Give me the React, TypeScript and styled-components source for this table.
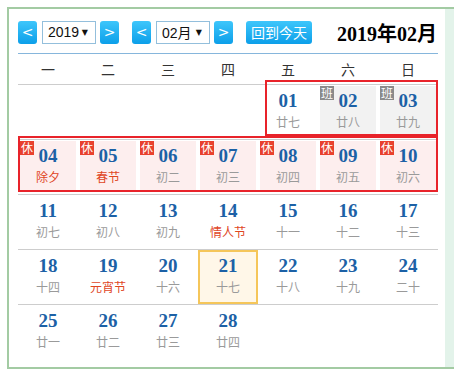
import React from "react";
import styled, { createGlobalStyle } from "styled-components";

const GlobalStyle = createGlobalStyle`
  html, body { margin: 0; padding: 0; overflow: hidden; background: #fff; }
  body { font-family: "Liberation Sans", "Noto Sans CJK SC", sans-serif; }
`;

const Frame = styled.div`
  margin: 7px 0 0 7px;
  width: 447px;
  height: 362px;
  box-sizing: border-box;
  border: 2px solid #a3cba3;
  border-right: none;
  display: flex;
`;

const Main = styled.div`
  width: 436px;
  box-sizing: border-box;
  padding: 11px 7px 0 9px;
  background: #fff;
`;

const Side = styled.div`
  flex: 1;
  background: #e3f3ea;
`;

const Toolbar = styled.div`
  display: flex;
  align-items: center;
  height: 24px;
  padding-bottom: 9px;
  border-bottom: 1px solid #86b6dc;
`;

const NavButton = styled.div<{ $gap?: number }>`
  width: 19px;
  height: 23px;
  box-sizing: border-box;
  border-radius: 3px;
  background: linear-gradient(#3ec6fb, #0c9fe9);
  color: #fff;
  font: 14px/23px "DejaVu Sans", sans-serif;
  text-align: center;
  margin-right: ${(p) => p.$gap ?? 0}px;
`;

const FakeSelect = styled.div`
  width: 54px;
  height: 23px;
  box-sizing: border-box;
  border: 1px solid #93bfdc;
  display: flex;
  align-items: center;
  padding-left: 5px;
  margin: 0 4px 0 5px;
  font: 14px "Liberation Sans", "Noto Sans CJK SC", sans-serif;
  color: #111;
`;

const Arrow = styled.span`
  margin-left: auto;
  margin-right: 7px;
  font: 8px "DejaVu Sans", sans-serif;
  color: #111;
`;

const TodayButton = styled.div`
  height: 23px;
  box-sizing: border-box;
  padding: 0 5px;
  border-radius: 3px;
  background: linear-gradient(#3ec6fb, #0c9fe9);
  color: #fff;
  font: 14px/23px "Noto Sans CJK SC", sans-serif;
  white-space: nowrap;
`;

const Title = styled.div`
  margin-left: auto;
  margin-right: 1px;
  font: bold 20px "Liberation Serif", "Noto Sans CJK SC", serif;
  color: #000;
`;

const WeekHead = styled.div`
  display: grid;
  grid-template-columns: repeat(7, 60px);
  height: 30px;
`;

const WeekLabel = styled.div`
  text-align: center;
  font: 14px/30px "Noto Sans CJK SC", sans-serif;
  color: #333;
`;

const Body = styled.div`
  position: relative;
`;

const Row = styled.div`
  display: grid;
  grid-template-columns: repeat(7, 60px);
  height: 55px;
  box-sizing: border-box;
  border-top: 1px solid #cdcdcd;
`;

type Kind = "normal" | "rest" | "work" | "today";

const Cell = styled.div<{ $kind: Kind }>`
  position: relative;
  display: flex;
  flex-direction: column;
  align-items: center;
  box-sizing: border-box;
  margin: ${(p) => (p.$kind === "today" ? "0" : "1px 2px 3px")};
  padding-top: ${(p) => (p.$kind === "today" ? "4px" : "5px")};
  border: ${(p) => (p.$kind === "today" ? "2px solid #f5c65a" : "none")};
  background: ${(p) =>
    p.$kind === "rest"
      ? "#fdeeee"
      : p.$kind === "work"
      ? "#f2f2f2"
      : p.$kind === "today"
      ? "#fff7e8"
      : "transparent"};
`;

const DayNum = styled.div`
  font: bold 19px/20px "Liberation Serif", serif;
  color: #1c61a6;
`;

const Lunar = styled.div<{ $fest?: boolean }>`
  margin-top: 3px;
  font: 12px/16px "Noto Sans CJK SC", sans-serif;
  color: ${(p) => (p.$fest ? "#e0461f" : "#9a9a9a")};
`;

const Badge = styled.span<{ $work?: boolean }>`
  position: absolute;
  top: 0;
  left: 0;
  width: 14px;
  height: 14px;
  background: ${(p) => (p.$work ? "#8a8a8a" : "#e8412d")};
  color: #fff;
  font: 12px/14px "Noto Sans CJK SC", sans-serif;
  text-align: center;
`;

const Outline = styled.div`
  position: absolute;
  box-sizing: border-box;
  border: 2px solid #e8232a;
  pointer-events: none;
`;

type Day = {
  d: number;
  lunar: string;
  fest?: boolean;
  kind?: Kind;
  badge?: "休" | "班";
};

const rows: (Day | null)[][] = [
  [null, null, null, null,
    { d: 1, lunar: "廿七" },
    { d: 2, lunar: "廿八", kind: "work", badge: "班" },
    { d: 3, lunar: "廿九", kind: "work", badge: "班" }],
  [
    { d: 4, lunar: "除夕", fest: true, kind: "rest", badge: "休" },
    { d: 5, lunar: "春节", fest: true, kind: "rest", badge: "休" },
    { d: 6, lunar: "初二", kind: "rest", badge: "休" },
    { d: 7, lunar: "初三", kind: "rest", badge: "休" },
    { d: 8, lunar: "初四", kind: "rest", badge: "休" },
    { d: 9, lunar: "初五", kind: "rest", badge: "休" },
    { d: 10, lunar: "初六", kind: "rest", badge: "休" },
  ],
  [
    { d: 11, lunar: "初七" },
    { d: 12, lunar: "初八" },
    { d: 13, lunar: "初九" },
    { d: 14, lunar: "情人节", fest: true },
    { d: 15, lunar: "十一" },
    { d: 16, lunar: "十二" },
    { d: 17, lunar: "十三" },
  ],
  [
    { d: 18, lunar: "十四" },
    { d: 19, lunar: "元宵节", fest: true },
    { d: 20, lunar: "十六" },
    { d: 21, lunar: "十七", kind: "today" },
    { d: 22, lunar: "十八" },
    { d: 23, lunar: "十九" },
    { d: 24, lunar: "二十" },
  ],
  [
    { d: 25, lunar: "廿一" },
    { d: 26, lunar: "廿二" },
    { d: 27, lunar: "廿三" },
    { d: 28, lunar: "廿四" },
    null, null, null,
  ],
];

const weekNames = ["一", "二", "三", "四", "五", "六", "日"];

export default function App() {
  return (
    <>
      <GlobalStyle />
      <Frame>
        <Main>
          <Toolbar>
            <NavButton>&lt;</NavButton>
            <FakeSelect>
              2019<Arrow>▼</Arrow>
            </FakeSelect>
            <NavButton $gap={13}>&gt;</NavButton>
            <NavButton>&lt;</NavButton>
            <FakeSelect>
              02月<Arrow>▼</Arrow>
            </FakeSelect>
            <NavButton $gap={13}>&gt;</NavButton>
            <TodayButton>回到今天</TodayButton>
            <Title>2019年02月</Title>
          </Toolbar>
          <WeekHead>
            {weekNames.map((w) => (
              <WeekLabel key={w}>{w}</WeekLabel>
            ))}
          </WeekHead>
          <Body>
            {rows.map((row, ri) => (
              <Row key={ri}>
                {row.map((day, ci) =>
                  day ? (
                    <Cell key={ci} $kind={day.kind ?? "normal"}>
                      {day.badge && (
                        <Badge $work={day.badge === "班"}>{day.badge}</Badge>
                      )}
                      <DayNum>{String(day.d).padStart(2, "0")}</DayNum>
                      <Lunar $fest={day.fest}>{day.lunar}</Lunar>
                    </Cell>
                  ) : (
                    <div key={ci} />
                  )
                )}
              </Row>
            ))}
            <Outline style={{ top: -4, left: 247, width: 173, height: 56 }} />
            <Outline style={{ top: 52, left: 0, width: 420, height: 56 }} />
          </Body>
        </Main>
        <Side />
      </Frame>
    </>
  );
}
